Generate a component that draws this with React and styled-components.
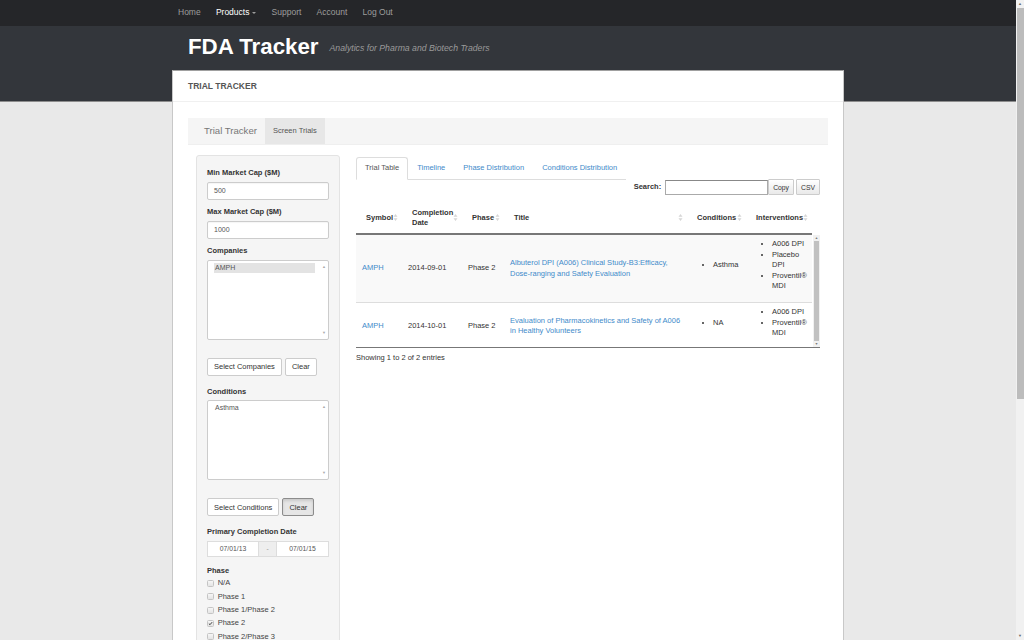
import React from "react";
import styled, { createGlobalStyle } from "styled-components";

const GlobalStyle = createGlobalStyle`
  html, body {
    margin: 0;
    padding: 0;
  }
  body {
    font-family: "Liberation Sans", Arial, sans-serif;
    font-size: 7.5px;
    line-height: 1.4;
    color: #333;
    background: #e9e9e9;
  }
  * {
    box-sizing: border-box;
  }
`;

const nav = ["Home", "Products", "Support", "Account", "Log Out"];

const phases = [
  { name: "N/A" },
  { name: "Phase 1" },
  { name: "Phase 1/Phase 2" },
  { name: "Phase 2", checked: true },
  { name: "Phase 2/Phase 3" },
  { name: "Phase 3" },
  { name: "Phase 4" },
];

const columns = [
  { label: "Symbol", width: 46 },
  { label: "Completion Date", width: 60 },
  { label: "Phase", width: 42 },
  { label: "Title", width: 183 },
  { label: "Conditions", width: 59 },
  { label: "Interventions", width: 66 },
];

const trials = [
  {
    symbol: "AMPH",
    date: "2014-09-01",
    phase: "Phase 2",
    title:
      "Albuterol DPI (A006) Clinical Study-B3:Efficacy, Dose-ranging and Safety Evaluation",
    conditions: ["Asthma"],
    interventions: ["A006 DPI", "Placebo DPI", "Proventil® MDI"],
  },
  {
    symbol: "AMPH",
    date: "2014-10-01",
    phase: "Phase 2",
    title:
      "Evaluation of Pharmacokinetics and Safety of A006 in Healthy Volunteers",
    conditions: ["NA"],
    interventions: ["A006 DPI", "Proventil® MDI"],
  },
];

const SortIcon = () => (
  <svg width="5" height="9" viewBox="0 0 5 9">
    <path d="M0.5 3.8 L2.5 1 L4.5 3.8 Z M0.5 5.2 L2.5 8 L4.5 5.2 Z" fill="#d6d6d6" />
  </svg>
);

const Check = () => (
  <svg width="7" height="7" viewBox="0 0 7 7">
    <path d="M1.2 3.6 L2.8 5.2 L5.8 1.6" stroke="#333" strokeWidth="1.3" fill="none" />
  </svg>
);

const App = () => {
  return (
    <>
      <GlobalStyle />
      <Shell>
        <Page>
          <NavBar>
            <NavInner>
              {nav.map((item) => (
                <NavItem key={item} $active={item === "Products"}>
                  {item}
                  {item === "Products" && <Caret />}
                </NavItem>
              ))}
            </NavInner>
          </NavBar>

          <Brand>
            <Logo>FDA Tracker</Logo>
            <Tagline>Analytics for Pharma and Biotech Traders</Tagline>
          </Brand>

          <Container>
            <SectionHead>Trial Tracker</SectionHead>
            <Body>
              <SubNav>
                <SubBrand>Trial Tracker</SubBrand>
                <SubLink $active>Screen Trials</SubLink>
              </SubNav>

              <Columns>
                <SideCol>
                  <Well>
                    <Group>
                      <Label>Min Market Cap ($M)</Label>
                      <Input>500</Input>
                    </Group>
                    <Group>
                      <Label>Max Market Cap ($M)</Label>
                      <Input>1000</Input>
                    </Group>
                    <Group>
                      <Label>Companies</Label>
                      <ListBox>
                        <ListItems>
                          <ListOption $selected>AMPH</ListOption>
                        </ListItems>
                        <ListRail>
                          <span>▲</span>
                          <span>▼</span>
                        </ListRail>
                      </ListBox>
                    </Group>
                    <ButtonRow>
                      <Button>Select Companies</Button>
                      <Button>Clear</Button>
                    </ButtonRow>
                    <Group>
                      <Label>Conditions</Label>
                      <ListBox>
                        <ListItems>
                          <ListOption>Asthma</ListOption>
                        </ListItems>
                        <ListRail>
                          <span>▲</span>
                          <span>▼</span>
                        </ListRail>
                      </ListBox>
                    </Group>
                    <ButtonRow>
                      <Button>Select Conditions</Button>
                      <Button $pressed>Clear</Button>
                    </ButtonRow>
                    <Group $spaced>
                      <Label>Primary Completion Date</Label>
                      <DateRange>
                        <DateField>07/01/13</DateField>
                        <DateAddon>-</DateAddon>
                        <DateField>07/01/15</DateField>
                      </DateRange>
                    </Group>
                    <Label>Phase</Label>
                    <CheckList>
                      {phases.map((p) => (
                        <CheckRow key={p.name}>
                          <CheckBox>{p.checked && <Check />}</CheckBox>
                          {p.name}
                        </CheckRow>
                      ))}
                    </CheckList>
                  </Well>
                </SideCol>

                <MainCol>
                  <Tabs>
                    <Tab $active>Trial Table</Tab>
                    <Tab>Timeline</Tab>
                    <Tab>Phase Distribution</Tab>
                    <Tab>Conditions Distribution</Tab>
                  </Tabs>

                  <Toolbar>
                    <SearchLabel>Search:</SearchLabel>
                    <SearchBox />
                    <ToolButton>Copy</ToolButton>
                    <ToolButton>CSV</ToolButton>
                  </Toolbar>

                  <HeadWrap>
                    <Table>
                      <colgroup>
                        {columns.map((c) => (
                          <col key={c.label} style={{ width: c.width }} />
                        ))}
                      </colgroup>
                      <thead>
                        <tr>
                          {columns.map((c) => (
                            <Th key={c.label}>
                              {c.label}
                              <SortSlot>
                                <SortIcon />
                              </SortSlot>
                            </Th>
                          ))}
                        </tr>
                      </thead>
                    </Table>
                  </HeadWrap>

                  <ScrollBody>
                    <Table>
                      <colgroup>
                        {columns.map((c) => (
                          <col key={c.label} style={{ width: c.width }} />
                        ))}
                      </colgroup>
                      <tbody>
                        {trials.map((t, i) => (
                          <Row key={t.date} $striped={i % 2 === 0} $first={i === 0}>
                            <Td>
                              <Link>{t.symbol}</Link>
                            </Td>
                            <Td>{t.date}</Td>
                            <Td>{t.phase}</Td>
                            <Td $tight>
                              <Link>{t.title}</Link>
                            </Td>
                            <Td>
                              <Bullets>
                                {t.conditions.map((c) => (
                                  <li key={c}>{c}</li>
                                ))}
                              </Bullets>
                            </Td>
                            <Td $tight>
                              <Bullets>
                                {t.interventions.map((c) => (
                                  <li key={c}>{c}</li>
                                ))}
                              </Bullets>
                            </Td>
                          </Row>
                        ))}
                      </tbody>
                    </Table>
                    <TableRail>
                      <RailArrow>▲</RailArrow>
                      <RailThumb />
                      <RailArrow>▼</RailArrow>
                    </TableRail>
                  </ScrollBody>

                  <Info>Showing 1 to 2 of 2 entries</Info>
                </MainCol>
              </Columns>
            </Body>
          </Container>
        </Page>

        <PageRail>
          <PageArrow>▲</PageArrow>
          <PageThumb />
          <PageTrack />
          <PageArrow>▼</PageArrow>
        </PageRail>
      </Shell>
    </>
  );
};

const Shell = styled.div`
  display: grid;
  grid-template-columns: 1fr 8px;
  align-items: start;
`;

const Page = styled.div`
  min-height: 1040px;
  background: linear-gradient(
    to bottom,
    #252629 0,
    #252629 26px,
    #33363b 26px,
    #33363b 101px,
    #8d8d8d 101px,
    #8d8d8d 102px,
    #e9e9e9 102px
  );
  display: flex;
  flex-direction: column;
`;

const PageRail = styled.div`
  height: 640px;
  background: #f1f1f1;
  display: flex;
  flex-direction: column;
  align-items: center;
`;

const PageArrow = styled.span`
  height: 8px;
  display: flex;
  align-items: center;
  font-size: 4px;
  color: #6a6a6a;
`;

const PageThumb = styled.div`
  width: 7px;
  height: 391px;
  background: #bcbcbc;
`;

const PageTrack = styled.div`
  flex: 1;
`;

const NavBar = styled.nav`
  height: 26px;
`;

const NavInner = styled.ul`
  width: 672px;
  margin: 0 auto;
  padding: 0;
  list-style: none;
  display: flex;
  height: 100%;
`;

const NavItem = styled.li`
  display: flex;
  align-items: center;
  padding: 0 7.6px;
  font-size: 8.5px;
  color: ${({ $active }) => ($active ? "#fff" : "#9d9d9d")};

  &:first-child {
    padding-left: 6px;
  }
`;

const Caret = styled.span`
  display: inline-block;
  margin-left: 3px;
  border-top: 2.5px solid #9d9d9d;
  border-left: 2.5px solid transparent;
  border-right: 2.5px solid transparent;
`;

const Brand = styled.header`
  width: 672px;
  height: 44px;
  margin: 0 auto;
  padding: 0 16px;
  display: flex;
  align-items: center;
  gap: 11px;
`;

const Logo = styled.h1`
  margin: 0 0 2px;
  font-size: 22.3px;
  font-weight: bold;
  color: #fff;
`;

const Tagline = styled.span`
  font-size: 8.7px;
  font-style: italic;
  color: #9a9a9a;
  margin-top: 1px;
`;

const Container = styled.main`
  width: 672px;
  flex: 1;
  margin: 0 auto;
  background: #fff;
  border: 1px solid #a0a0a0;
  border-bottom: none;
  border-left-color: #c8c8c8;
  border-right-color: #c8c8c8;
`;

const SectionHead = styled.h2`
  margin: 0;
  height: 31px;
  padding: 1px 15px 0;
  display: flex;
  align-items: center;
  font-size: 8.5px;
  font-weight: bold;
  text-transform: uppercase;
  color: #555;
  border-bottom: 1px solid #f0f0f0;
`;

const Body = styled.div`
  padding: 16px 15px;
`;

const SubNav = styled.div`
  height: 27px;
  background: #f5f5f5;
  border-bottom: 1px solid #efefef;
  display: flex;
  align-items: stretch;
  padding-left: 16px;
`;

const SubBrand = styled.span`
  display: flex;
  align-items: center;
  font-size: 9.6px;
  color: #777;
  margin-right: 8px;
`;

const SubLink = styled.span`
  display: flex;
  align-items: center;
  padding: 0 8px;
  font-size: 7.5px;
  color: #555;
  background: ${({ $active }) => ($active ? "#e7e7e7" : "transparent")};
`;

const Columns = styled.div`
  display: grid;
  grid-template-columns: 160px 1fr;
  margin-top: 10px;
`;

const SideCol = styled.aside`
  padding: 0 8px;
`;

const Well = styled.div`
  background: #f5f5f5;
  border: 1px solid #e3e3e3;
  border-radius: 3px;
  padding: 12px 10px 20px;
  min-height: 560px;
`;

const Group = styled.div`
  margin-bottom: ${({ $spaced }) => ($spaced ? "9px" : "7.5px")};
`;

const Label = styled.label`
  display: block;
  font-weight: bold;
  line-height: 10.5px;
  margin-bottom: 3px;
`;

const Input = styled.div`
  height: 18px;
  background: #fff;
  border: 1px solid #ccc;
  border-radius: 2px;
  padding: 0 6px;
  display: flex;
  align-items: center;
  font-size: 7px;
  color: #555;
  box-shadow: inset 0 1px 1px rgba(0, 0, 0, 0.04);
`;

const ListBox = styled.div`
  height: 80px;
  background: #fff;
  border: 1px solid #ccc;
  border-radius: 2px;
  display: flex;
`;

const ListItems = styled.div`
  flex: 1;
  padding: 2px 5px 0 6px;
`;

const ListOption = styled.div`
  height: 10px;
  padding-left: 1px;
  display: flex;
  align-items: center;
  font-size: 7px;
  color: #555;
  background: ${({ $selected }) => ($selected ? "#e3e3e3" : "transparent")};
`;

const ListRail = styled.div`
  width: 8px;
  display: flex;
  flex-direction: column;
  justify-content: space-between;
  align-items: center;
  padding: 3px 0;
  font-size: 4px;
  color: #aaa;
`;

const ButtonRow = styled.div`
  display: flex;
  gap: 3px;
  margin: 18px 0 11px;
`;

const Button = styled.button`
  height: 18px;
  padding: 0 6px;
  font-family: inherit;
  font-size: 7.5px;
  color: #333;
  background: ${({ $pressed }) => ($pressed ? "#e6e6e6" : "#fff")};
  border: 1px solid ${({ $pressed }) => ($pressed ? "#8c8c8c" : "#ccc")};
  border-radius: 2px;
  box-shadow: ${({ $pressed }) =>
    $pressed ? "inset 0 2px 3px rgba(0,0,0,0.125)" : "none"};
`;

const DateRange = styled.div`
  display: grid;
  grid-template-columns: 52px 17px 1fr;
  height: 16px;
`;

const DateField = styled.div`
  background: #fff;
  border: 1px solid #ddd;
  display: flex;
  align-items: center;
  justify-content: center;
  font-size: 6.8px;
  color: #555;
`;

const DateAddon = styled.div`
  background: #eee;
  border-top: 1px solid #ddd;
  border-bottom: 1px solid #ddd;
  display: flex;
  align-items: center;
  justify-content: center;
  font-size: 6.5px;
  color: #999;
`;

const CheckList = styled.div`
  margin-top: -2px;
`;

const CheckRow = styled.div`
  height: 13.3px;
  display: flex;
  align-items: center;
  gap: 3.7px;
  color: #444;
`;

const CheckBox = styled.span`
  width: 7px;
  height: 7px;
  display: flex;
  align-items: center;
  justify-content: center;
  border: 1px solid #c4c4c4;
  border-radius: 1.5px;
  background: linear-gradient(#f6f6f6, #e4e4e4);
`;

const MainCol = styled.section`
  padding: 2px 8px 0;
`;

const Tabs = styled.ul`
  display: flex;
  width: max-content;
  margin: 0;
  padding: 0;
  list-style: none;
  border-bottom: 1px solid #ddd;
  height: 23px;
`;

const Tab = styled.li`
  display: flex;
  align-items: center;
  white-space: nowrap;
  padding: 0 8px;
  margin-bottom: -1px;
  font-size: 7.5px;
  color: ${({ $active }) => ($active ? "#555" : "#428bca")};
  background: ${({ $active }) => ($active ? "#fff" : "transparent")};
  border: 1px solid ${({ $active }) => ($active ? "#ddd" : "transparent")};
  border-bottom-color: ${({ $active }) => ($active ? "#fff" : "transparent")};
  border-radius: 3px 3px 0 0;
`;

const Toolbar = styled.div`
  display: flex;
  justify-content: flex-end;
  align-items: center;
  margin-top: -1px;
  height: 16px;
`;

const SearchLabel = styled.span`
  font-weight: bold;
  margin-right: 4px;
`;

const SearchBox = styled.div`
  width: 103px;
  height: 15px;
  background: #fff;
  border: 1px solid #aaa;
  border-top-color: #888;
`;

const ToolButton = styled.button`
  height: 16px;
  padding: 0 4px;
  margin-left: 2px;
  font-family: inherit;
  font-size: 6.8px;
  color: #333;
  background: linear-gradient(#fff, #e9e9e9);
  border: 1px solid #ccc;
  border-radius: 1px;

  &:first-of-type {
    margin-left: 0;
  }
`;

const HeadWrap = styled.div`
  margin-top: 7px;
  width: 456px;
  border-bottom: 2px solid #777;
`;

const Table = styled.table`
  width: 456px;
  table-layout: fixed;
  border-collapse: collapse;
`;

const Th = styled.th`
  position: relative;
  height: 31px;
  padding: 0 14px 0 10px;
  text-align: left;
  vertical-align: middle;
  font-weight: bold;
  line-height: 10px;
  white-space: normal;
`;

const SortSlot = styled.span`
  position: absolute;
  right: 4px;
  top: 50%;
  margin-top: -4.5px;
  line-height: 0;
`;

const ScrollBody = styled.div`
  display: flex;
  height: 113px;
  border-bottom: 1px solid #777;
  overflow: hidden;
`;

const Row = styled.tr`
  background: ${({ $striped }) => ($striped ? "#f9f9f9" : "#fff")};
  border-top: ${({ $first }) => ($first ? "none" : "1px solid #ddd")};
`;

const Td = styled.td`
  padding: 4px ${({ $tight }) => ($tight ? "3px" : "6px")} 4px 6px;
  vertical-align: middle;
  line-height: 10.5px;
  color: #333;
`;

const Link = styled.a`
  color: #428bca;
  text-decoration: none;
`;

const Bullets = styled.ul`
  margin: 0 0 6.5px;
  padding-left: 20px;
  li {
    line-height: 10.5px;
  }
`;

const TableRail = styled.div`
  width: 7px;
  margin-left: 1px;
  background: #f1f1f1;
  display: flex;
  flex-direction: column;
  align-items: center;
`;

const RailArrow = styled.span`
  font-size: 3.5px;
  line-height: 6px;
  color: #777;
`;

const RailThumb = styled.div`
  flex: 1;
  width: 5px;
  background: #c1c1c1;
`;

const Info = styled.div`
  margin-top: 5px;
  line-height: 10.5px;
`;

export default App;
